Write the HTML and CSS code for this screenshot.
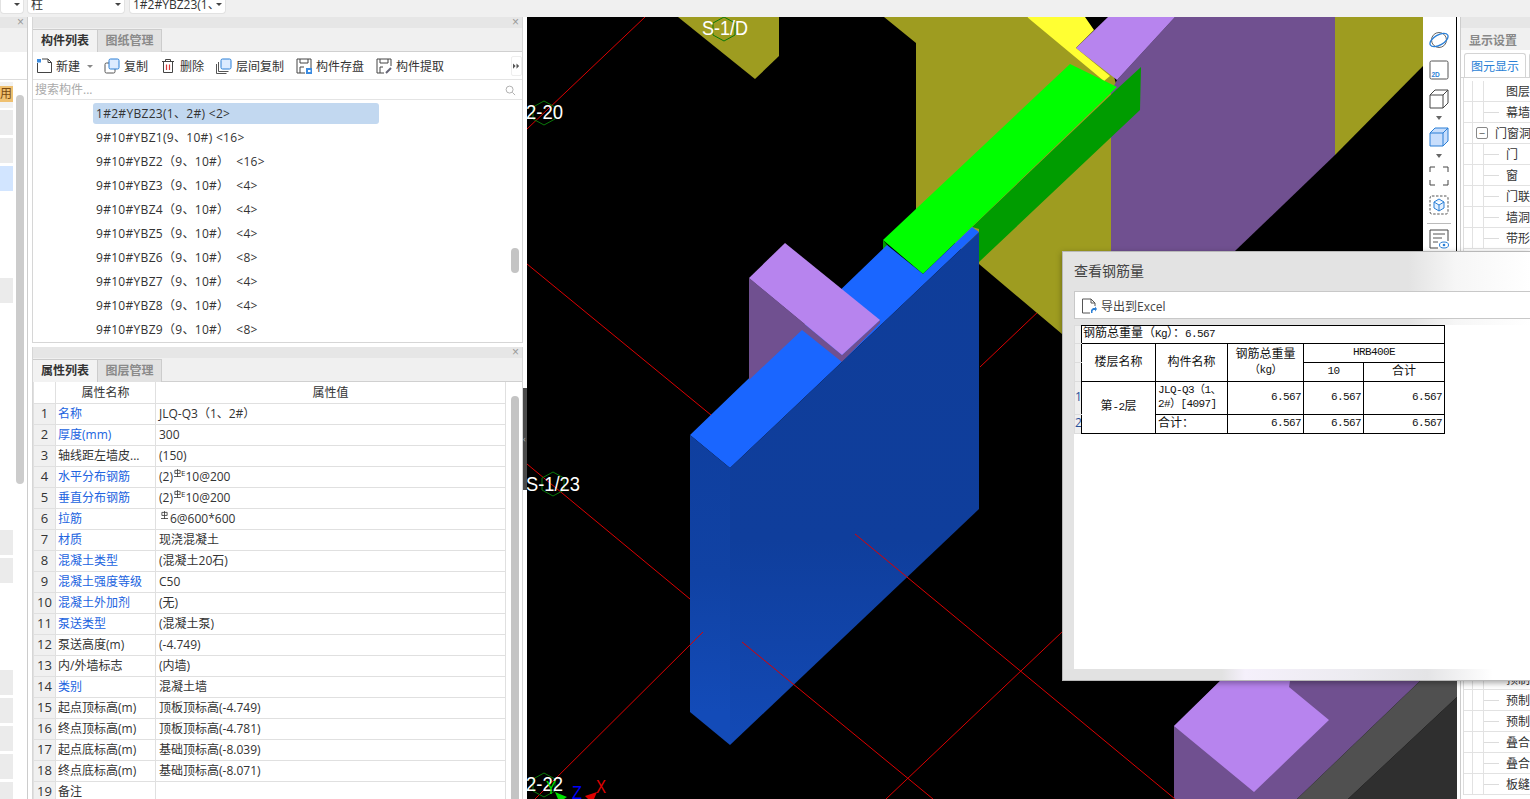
FILE: index.html
```html
<!DOCTYPE html>
<html lang="zh">
<head>
<meta charset="utf-8">
<title>查看钢筋量</title>
<link rel="stylesheet" href="styles.css">
</head>
<body>
<div class="app">
  <div class="topbar">
    <div class="combo c0"><span class="caret"></span></div>
    <div class="combo c1"><span class="combo-t">柱</span><span class="caret"></span></div>
    <div class="combo c2"><span class="combo-t">1#2#YBZ23(1、</span><span class="caret"></span></div>
  </div>
  <div class="main">
    <aside class="strip">
      <div class="phead"><span class="x">×</span></div>
      <div class="strip-tabs"></div>
      <div class="strip-tool"></div>
      <div class="strip-list">
        <div class="sr"><div class="sb sb-or"><span class="orange">用</span></div></div>
        <div class="sr"><div class="sb"></div></div>
        <div class="sr"><div class="sb"></div></div>
        <div class="sr"><div class="sb sb-blue"></div></div>
        <div class="sr"></div><div class="sr"></div><div class="sr"></div>
        <div class="sr"><div class="sb"></div></div>
        <div class="sr"></div><div class="sr"></div><div class="sr"></div><div class="sr"></div>
        <div class="sr"></div><div class="sr"></div><div class="sr"></div><div class="sr"></div>
        <div class="sr"><div class="sb"></div></div>
        <div class="sr"><div class="sb"></div></div>
        <div class="sr"></div><div class="sr"></div><div class="sr"></div>
        <div class="sr"><div class="sb"></div></div>
        <div class="sr"><div class="sb"></div></div>
        <div class="sr"><div class="sb"></div></div>
        <div class="sr"><div class="sb"></div></div>
        <div class="sr"><div class="sb"></div></div>
        <div class="strip-thumb"></div>
      </div>
    </aside>

    <section class="col">
      <div class="panel p-top">
        <div class="phead"><span class="x">×</span></div>
        <div class="tabs"><div class="tab on">构件列表</div><div class="tab">图纸管理</div></div>
        <div class="tools">
          <div class="tool tool-new">
            <svg class="ic" viewBox="0 0 16 16"><path d="M1.500 5v9.500h14V4.500L12 1H6" fill="none" stroke="#444"/><path d="M12 1v3.500h3.500" fill="none" stroke="#444"/><rect x="1" y="1" width="4" height="3.500" fill="#3b8be0"/></svg>
            <span>新建</span><span class="dd"></span>
          </div>
          <div class="tool">
            <svg class="ic" viewBox="0 0 16 16"><rect x="1" y="5" width="10" height="10" rx="1.500" fill="#fff" stroke="#555"/><rect x="5" y="1" width="10" height="10" rx="1.500" fill="#dcebff" stroke="#2a7fd6"/></svg>
            <span>复制</span>
          </div>
          <div class="tool">
            <svg class="ic" viewBox="0 0 16 16"><path d="M2 3.500h12M5.500 3.500V1.500h5v2M3.500 3.500v11h9v-11" fill="none" stroke="#444"/><path d="M6.500 6.500v5.500M9.500 6.500v5.500" stroke="#d93a3a" stroke-width="1.200"/></svg>
            <span>删除</span>
          </div>
          <div class="tool">
            <svg class="ic" viewBox="0 0 16 16"><path d="M.5 6v9.500h10M2.500 4v9.500h10" fill="none" stroke="#555"/><rect x="5" y="1" width="10" height="10" rx="1.500" fill="#dcebff" stroke="#2a7fd6"/></svg>
            <span>层间复制</span>
          </div>
          <div class="tool">
            <svg class="ic" viewBox="0 0 16 16"><path d="M9 15H1V1h14v9M4 1v4h8V1M4 15v-6h4" fill="none" stroke="#444"/><rect x="10" y="10" width="6" height="6" fill="#3b8be0"/><rect x="12" y="12" width="2.500" height="2" fill="#fff"/></svg>
            <span>构件存盘</span>
          </div>
          <div class="tool">
            <svg class="ic" viewBox="0 0 16 16"><path d="M8 15H1V1h14v7M4 1v4h8V1M4 15v-6h3" fill="none" stroke="#444"/><path d="M10 15l5-5" stroke="#667" stroke-width="2"/></svg>
            <span>构件提取</span>
          </div>
          <div class="more"><svg class="more-ic" viewBox="0 0 8 6"><path d="M0 0l3 3-3 3zM4 0l3 3-3 3z" fill="#555"/></svg></div>
        </div>
        <div class="search">
          <span>搜索构件...</span>
          <svg class="search-ic" viewBox="0 0 12 12"><circle cx="5" cy="5" r="3.800" fill="none" stroke="#aaa"/><path d="M8 8l3 3" stroke="#aaa"/></svg>
        </div>
        <div class="list">
          <div class="li sel">1#2#YBZ23(1、2#) &lt;2&gt;</div>
          <div class="li">9#10#YBZ1(9、10#) &lt;16&gt;</div>
          <div class="li">9#10#YBZ2（9、10#） &nbsp;&lt;16&gt;</div>
          <div class="li">9#10#YBZ3（9、10#） &nbsp;&lt;4&gt;</div>
          <div class="li">9#10#YBZ4（9、10#） &nbsp;&lt;4&gt;</div>
          <div class="li">9#10#YBZ5（9、10#） &nbsp;&lt;4&gt;</div>
          <div class="li">9#10#YBZ6（9、10#） &nbsp;&lt;8&gt;</div>
          <div class="li">9#10#YBZ7（9、10#） &nbsp;&lt;4&gt;</div>
          <div class="li">9#10#YBZ8（9、10#） &nbsp;&lt;4&gt;</div>
          <div class="li">9#10#YBZ9（9、10#） &nbsp;&lt;8&gt;</div>
          <div class="list-thumb"></div>
        </div>
      </div>

      <div class="panel p-bot">
        <div class="phead"><span class="x">×</span></div>
        <div class="tabs"><div class="tab on">属性列表</div><div class="tab">图层管理</div></div>
        <div class="props">
          <table class="ptable">
            <colgroup><col class="pc0"><col class="pc1"><col></colgroup>
            <thead><tr><th></th><th>属性名称</th><th>属性值</th></tr></thead>
            <tbody>
              <tr><td class="n">1</td><td class="b">名称</td><td>JLQ-Q3（1、2#）</td></tr>
              <tr><td class="n">2</td><td class="b">厚度(mm)</td><td>300</td></tr>
              <tr><td class="n">3</td><td class="k">轴线距左墙皮...</td><td>(150)</td></tr>
              <tr><td class="n">4</td><td class="b">水平分布钢筋</td><td>(2)<svg class="rb" viewBox="0 0 8 9"><path d="M1 1.500h6v3.500H1zM4 0v9M0 8.500h8" fill="none" stroke="#333" stroke-width=".9"/></svg><sup>E</sup>10@200</td></tr>
              <tr><td class="n">5</td><td class="b">垂直分布钢筋</td><td>(2)<svg class="rb" viewBox="0 0 8 9"><path d="M1 1.500h6v3.500H1zM4 0v9M0 8.500h8" fill="none" stroke="#333" stroke-width=".9"/></svg><sup>E</sup>10@200</td></tr>
              <tr><td class="n">6</td><td class="b">拉筋</td><td><svg class="rb rb6" viewBox="0 0 8 9"><path d="M1 1.500h6v3.500H1zM4 0v9M0 8.500h8" fill="none" stroke="#333" stroke-width=".9"/></svg>6@600*600</td></tr>
              <tr><td class="n">7</td><td class="b">材质</td><td>现浇混凝土</td></tr>
              <tr><td class="n">8</td><td class="b">混凝土类型</td><td>(混凝土20石)</td></tr>
              <tr><td class="n">9</td><td class="b">混凝土强度等级</td><td>C50</td></tr>
              <tr><td class="n">10</td><td class="b">混凝土外加剂</td><td>(无)</td></tr>
              <tr><td class="n">11</td><td class="b">泵送类型</td><td>(混凝土泵)</td></tr>
              <tr><td class="n">12</td><td class="k">泵送高度(m)</td><td>(-4.749)</td></tr>
              <tr><td class="n">13</td><td class="k">内/外墙标志</td><td>(内墙)</td></tr>
              <tr><td class="n">14</td><td class="b">类别</td><td>混凝土墙</td></tr>
              <tr><td class="n">15</td><td class="k">起点顶标高(m)</td><td>顶板顶标高(-4.749)</td></tr>
              <tr><td class="n">16</td><td class="k">终点顶标高(m)</td><td>顶板顶标高(-4.781)</td></tr>
              <tr><td class="n">17</td><td class="k">起点底标高(m)</td><td>基础顶标高(-8.039)</td></tr>
              <tr><td class="n">18</td><td class="k">终点底标高(m)</td><td>基础顶标高(-8.071)</td></tr>
              <tr><td class="n">19</td><td class="k">备注</td><td></td></tr>
            </tbody>
          </table>
          <div class="props-scroll"><div class="props-thumb"></div></div>
        </div>
      </div>
    </section>

    <div class="split"><div class="split-grip">‹</div></div>

    <div class="view">
      <svg class="scene" viewBox="527 17 930 782">
        <defs>
          <linearGradient id="frontBlue" gradientUnits="userSpaceOnUse" x1="0" y1="232" x2="0" y2="745">
            <stop offset="0" stop-color="#0f3d99"/>
            <stop offset=".6" stop-color="#0f3e9c"/>
            <stop offset="1" stop-color="#134ab6"/>
          </linearGradient>
          <linearGradient id="sideBlue" gradientUnits="userSpaceOnUse" x1="0" y1="435" x2="0" y2="712">
            <stop offset="0" stop-color="#0f3f9f"/>
            <stop offset=".5" stop-color="#1042a4"/>
            <stop offset="1" stop-color="#134bb8"/>
          </linearGradient>
        </defs>
        <rect x="527" y="17" width="930" height="782" fill="#000"/>
        <g class="red">
          <path d="M645 17L527 129M527 264L711 415M1062 289L980 367M527 464L690 599M886 799L1062 632"/>
        </g>
        <polygon class="olive" points="678,17 779,17 779,56 755,79"/>
        <polygon class="olive" points="884,17 1027,17 1112,70 1118,90 1111,92 1111,334 1062,334 979,264 916,210 916,43"/>
        <polygon class="purple" points="1111,92 1117,80 1175,17 1335,17 1335,155 1111,370"/>
        <polygon class="olive" points="1335,17 1424,17 1424,65 1335,155"/>
        <polygon class="yellow" points="1027,17 1085,17 1094,30 1076,48 1110,76 1104,81"/>
        <polygon class="lilac" points="1108,17 1175,17 1117,80 1076,48"/>
        <polygon class="dgreen" points="1141,67 1140,110 979,262 979,229 972,227 1117,89"/>
        <polygon class="dgreen" points="883,240 883,251 888,246"/>
        <polygon class="green" points="1070,64 1117,87 923,274 883,240"/>
        <polygon class="lblue" points="690,435 887,245 923,274 972,227 979,232 730,468"/>
        <polygon class="purple" points="749,278 842,355 880,320 880,323 842,362 802,330 749,380"/>
        <polygon class="lilac" points="785,243 880,320 842,355 749,278"/>
        <polygon fill="url(#frontBlue)" points="730,468 979,232 979,509 730,745"/>
        <polygon fill="url(#sideBlue)" points="690,435 730,468 730,745 690,712"/>
        <polygon class="purple" points="1174,726 1220,681 1420,681 1297,799 1174,799"/>
        <polygon class="lilac" points="1174,726 1220,681 1290,681 1289,687 1329,720 1254,792"/>
        <polygon class="grey1" points="1420,681 1457,681 1457,697 1348,799 1297,799"/>
        <polygon class="grey2" points="1457,697 1457,799 1348,799"/>
        <g class="red">
          <path d="M703 632L535 799M855 534L1175 799M742 642L933 799"/>
        </g>
        <g class="hex">
          <polygon points="724,17 735,23 735,35 724,41 713,35 713,23"/>
          <polygon points="544,101 555,107 555,119 544,125 533,119 533,107"/>
          <polygon points="553,472 564,478 564,490 553,496 542,490 542,478"/>
          <polygon points="544,773 555,779 555,791 544,797 533,791 533,779"/>
        </g>
        <g class="lab">
          <text x="702" y="35" textLength="46" lengthAdjust="spacingAndGlyphs">S-1/D</text>
          <text x="526" y="119" textLength="37" lengthAdjust="spacingAndGlyphs">2-20</text>
          <text x="526" y="491" textLength="54" lengthAdjust="spacingAndGlyphs">S-1/23</text>
          <text x="526" y="791" textLength="37" lengthAdjust="spacingAndGlyphs">2-22</text>
        </g>
        <polygon fill="#00e000" points="555,792 567,797 564,799 558,799"/>
        <polygon fill="#e00000" points="597,792 585,796 588,799 594,799"/>
        <text class="ax ax-y" x="546" y="794" textLength="10" lengthAdjust="spacingAndGlyphs">Y</text>
        <text class="ax ax-z" x="572" y="799" textLength="10" lengthAdjust="spacingAndGlyphs">Z</text>
        <text class="ax ax-x" x="596" y="793" textLength="10" lengthAdjust="spacingAndGlyphs">X</text>
      </svg>
      <div class="vbar">
        <svg class="vi vi-a" viewBox="0 0 20 20"><ellipse cx="10" cy="10" rx="7.500" ry="7.500" fill="none" stroke="#666"/><ellipse cx="10" cy="10" rx="10" ry="5" transform="rotate(-30 10 10)" fill="none" stroke="#2a7fd6" stroke-width="1.300"/></svg>
        <svg class="vi vi-b" viewBox="0 0 20 20"><rect x="1" y="1" width="18" height="18" rx="1.500" fill="none" stroke="#555"/><text class="t2d" x="2.500" y="16.500">2D</text></svg>
        <svg class="vi vi-c" viewBox="0 0 20 20"><path d="M1 6v13h13V6zM1 6l5-5h13v13l-5 5M14 6l5-5" fill="#fff" stroke="#444"/></svg>
        <span class="va"></span>
        <svg class="vi vi-c" viewBox="0 0 20 20"><path d="M1 6l5-5h13v13l-5 5H1z" fill="#c8defc" stroke="#2a7fd6"/><path d="M1 6h13v13M14 6l5-5" fill="none" stroke="#2a7fd6"/></svg>
        <span class="va va-2"></span>
        <svg class="vi vi-a" viewBox="0 0 20 20"><path d="M1 6V1h5M14 1h5v5M19 14v5h-5M6 19H1v-5" fill="none" stroke="#444"/></svg>
        <svg class="vi vi-d" viewBox="0 0 20 20"><rect x="1" y="1" width="18" height="18" rx="2" fill="none" stroke="#555" stroke-dasharray="2.500 1.500"/><path d="M10 4l5 3v6l-5 3-5-3V7zM5 7l5 3 5-3M10 10v6" fill="#e3f0ff" stroke="#2a7fd6"/></svg>
        <div class="vsep"></div>
        <svg class="vi" viewBox="0 0 20 20"><path d="M9 19H1V1h18v11" fill="none" stroke="#444"/><path d="M4 5h12M4 9h9M4 13h5" stroke="#555"/><ellipse cx="15" cy="16" rx="4.500" ry="3" fill="#fff" stroke="#2a7fd6"/><circle cx="15" cy="16" r="1.300" fill="#2a7fd6"/></svg>
      </div>
    </div>

    <aside class="rpanel">
      <div class="phead"></div>
      <div class="r-title">显示设置</div>
      <div class="r-tabs"><div class="r-tab">图元显示</div><div class="r-tab r-tab2"></div></div>
      <div class="tree">
        <div class="tr"><span class="t1"></span><span class="t2"></span><span class="t3"></span><span class="tt">图层</span></div>
        <div class="tr"><span class="t1"></span><span class="t2"></span><span class="t3 d"></span><span class="tt">幕墙</span></div>
        <div class="tr"><span class="t1"></span><span class="tbox">−</span><span class="tt tt-open">门窗洞口</span></div>
        <div class="tr"><span class="t1"></span><span class="t2"></span><span class="t3 d"></span><span class="tt">门</span></div>
        <div class="tr"><span class="t1"></span><span class="t2"></span><span class="t3 d"></span><span class="tt">窗</span></div>
        <div class="tr"><span class="t1"></span><span class="t2"></span><span class="t3 d"></span><span class="tt">门联窗</span></div>
        <div class="tr"><span class="t1"></span><span class="t2"></span><span class="t3 d"></span><span class="tt">墙洞</span></div>
        <div class="tr"><span class="t1"></span><span class="t2"></span><span class="t3 d"></span><span class="tt">带形窗</span></div>
        <div class="tree-gap"></div>
        <div class="tr"><span class="t1"></span><span class="t2"></span><span class="t3 d"></span><span class="tt">预制柱</span></div>
        <div class="tr"><span class="t1"></span><span class="t2"></span><span class="t3 d"></span><span class="tt">预制梁</span></div>
        <div class="tr"><span class="t1"></span><span class="t2"></span><span class="t3 d"></span><span class="tt">预制墙</span></div>
        <div class="tr"><span class="t1"></span><span class="t2"></span><span class="t3 d"></span><span class="tt">叠合板</span></div>
        <div class="tr"><span class="t1"></span><span class="t2"></span><span class="t3 d"></span><span class="tt">叠合梁</span></div>
        <div class="tr"><span class="t1"></span><span class="t2"></span><span class="t3 d"></span><span class="tt">板缝</span></div>
      </div>
    </aside>
  </div>

  <div class="dlg">
    <div class="dlg-head">
      <div class="dlg-title">查看钢筋量</div>
      <div class="dlg-tool">
        <svg class="ic" viewBox="0 0 16 16"><path d="M9 15H1.500V1H10l4 4v3" fill="none" stroke="#555"/><path d="M10 1v4h4" fill="none" stroke="#555"/><path d="M10 15v-3l2-2h2v-1.500l2 2.500-2 2.500V12h-1.500l-1 1v2z" fill="#2a7fd6"/></svg>
        <span>导出到Excel</span>
      </div>
    </div>
    <div class="dlg-body">
      <table class="rt">
        <colgroup><col class="r0"><col class="r1"><col class="r2"><col class="r3"><col class="r4"><col class="r5"></colgroup>
        <tr class="h18"><td class="rh"></td><td colspan="5" class="l ttl">钢筋总重量（<span class="m">Kg</span>）：<span class="m">6.567</span></td></tr>
        <tr class="h19"><td class="rh"></td><td rowspan="2" class="c">楼层名称</td><td rowspan="2" class="c">构件名称</td><td rowspan="2" class="c top">钢筋总重量<br><span class="m">（kg）</span></td><td colspan="2" class="c m">HRB400E</td></tr>
        <tr class="h19"><td class="rh"></td><td class="c m">10</td><td class="c">合计</td></tr>
        <tr class="h33"><td class="rh">1</td><td rowspan="2" class="c">第<span class="m">-2</span>层</td><td class="l m tight">JLQ-Q3（1、<br>2#）[4097]</td><td class="r m">6.567</td><td class="r m">6.567</td><td class="r m">6.567</td></tr>
        <tr class="h19"><td class="rh">2</td><td class="l">合计：</td><td class="r m">6.567</td><td class="r m">6.567</td><td class="r m">6.567</td></tr>
      </table>
    </div>
    <div class="dlg-foot"></div>
  </div>
</div>
</body>
</html>
```
FILE: styles.css
```css
* { box-sizing: border-box; }
html, body { margin: 0; padding: 0; height: 100%; overflow: hidden; background: #f0f0f0; }
body { font: 12px/1.2 "Open Sans", "Noto Sans CJK SC", "Liberation Sans", sans-serif; color: #333; }
.app { position: relative; width: 1530px; height: 799px; overflow: hidden; }

.topbar { height: 17px; display: flex; gap: 3px; padding-bottom: 3px; overflow: hidden; background: #f0f0f0; }
.combo { height: 14px; background: #fff; border: 1px solid #e2e2e2; border-top: 0; border-radius: 0 0 4px 4px; display: flex; justify-content: space-between; align-items: flex-start; padding: 0 3px 0 3px; overflow: hidden; }
.c0 { width: 24px; justify-content: flex-end; }
.c1 { width: 98px; }
.c2 { width: 97px; margin-left: 1px; }
.combo-t { line-height: 14px; margin-top: -2px; white-space: nowrap; overflow: hidden; }
.caret { width: 0; height: 0; border: 3px solid transparent; border-top: 3px solid #444; border-bottom: 0; margin: 3px 0 0 2px; flex: none; }

.main { display: flex; height: 782px; background: #fff; }
.phead { height: 11px; background: #e6e6e6; position: relative; }
.x { position: absolute; right: 3px; top: -1px; font-family: "Liberation Sans", sans-serif; font-size: 12px; line-height: 12px; color: #999; }

.strip { width: 28px; border-right: 1px solid #ccc; flex: none; }
.strip-tabs { height: 24px; background: #f0f0f0; }
.strip-tool { height: 28px; border-bottom: 1px solid #ddd; }
.strip-list { position: relative; height: 719px; padding-top: 2px; overflow: hidden; }
.sr { height: 28px; }
.sb { width: 13px; height: 25px; background: #ebebeb; }
.sb-or { background: #f2f2f2; padding-top: 4px; height: 26px; }
.orange { display: block; height: 16px; line-height: 16px; background: #efc070; color: #7a4a10; font-size: 12px; overflow: hidden; }
.sb-blue { background: #d2e5ff; }
.strip-thumb { position: absolute; left: 16px; top: 15px; width: 8px; height: 389px; background: #ccc; border-radius: 4px; }

.col { width: 491px; margin-left: 4px; flex: none; display: flex; flex-direction: column; background: #fff; }
.panel { border: 1px solid #d6d6d6; border-top: 0; }
.p-top { height: 326px; position: relative; }
.p-bot { margin-top: 4px; height: 452px; border-bottom: 0; }
.tabs { height: 24px; padding-top: 1px; display: flex; background: #f0f0f0; border-bottom: 1px solid #d0d0d0; }
.tab { width: 64px; height: 23px; line-height: 22px; text-align: center; font-weight: 700; color: #8a8a8a; background: #e2e2e2; border-right: 1px solid #ccc; border-top: 1px solid #ccc; }
.tab.on { width: 65px; color: #333; background: #f2f2f2; }

.tools { height: 28px; display: flex; align-items: center; gap: 12px; padding: 3px 0 0 3px; border-bottom: 1px solid #e4e4e4; position: relative; }
.tool { display: flex; align-items: center; gap: 4px; white-space: nowrap; }
.tool .ic { margin-top: -2px; }
.tool-new { margin-right: -1px; }
.ic { width: 16px; height: 16px; flex: none; }
.dd { width: 0; height: 0; border: 3px solid transparent; border-top: 3px solid #888; border-bottom: 0; margin-left: 3px; }
.more { position: absolute; right: 0; top: 4px; width: 11px; height: 20px; display: flex; align-items: center; justify-content: center; border: 1px solid #eee; border-radius: 2px; }
.more-ic { width: 7px; height: 6px; }

.search { height: 20px; padding: 2px 6px 0 2px; display: flex; align-items: center; justify-content: space-between; color: #aaa; border-bottom: 1px solid #e4e4e4; }
.search-ic { width: 11px; height: 11px; }

.list { position: relative; height: 244px; padding-top: 2px; overflow: hidden; }
.li { height: 24px; padding-left: 63px; line-height: 24px; white-space: nowrap; letter-spacing: .3px; }
.li.sel { margin: 1px 0 2px 60px; width: 286px; height: 21px; padding-left: 3px; line-height: 21px; background: #c2d8f0; border-radius: 3px; }
.list-thumb { position: absolute; left: 478px; top: 148px; width: 8px; height: 25px; background: #c4c4c4; border-radius: 4px; }

.props { position: relative; display: flex; height: 417px; overflow: hidden; }
.ptable { width: 473px; height: 0; table-layout: fixed; border-collapse: collapse; flex: none; }
.pc0 { width: 22px; }
.pc1 { width: 100px; }
.ptable th { height: 21px; padding: 2px 0 0; font-weight: 400; border: 1px solid #e0e0e0; border-top: 0; text-align: center; }
.ptable td { height: 21px; padding: 0 0 0 3px; border: 1px solid #e0e0e0; white-space: nowrap; overflow: hidden; line-height: 17px; }
.ptable td.n { padding: 0; text-align: center; background: #f0f0f0; font-size: 13px; }
.ptable td.b { color: #2163e0; padding-left: 2px; }
.ptable td.k { padding-left: 2px; }
sup { font-size: 8px; line-height: 0; vertical-align: 5px; }
.rb { width: 7px; height: 8px; vertical-align: 4px; margin-left: 1px; }
.rb6 { margin-left: 2px; margin-right: 2px; }
.props-scroll { flex: 1; position: relative; }
.props-thumb { position: absolute; left: 5px; top: 14px; width: 8px; height: 420px; background: #c4c4c4; border-radius: 4px; }

.split { width: 4px; flex: none; background: #fff; position: relative; }
.split-grip { position: absolute; left: 0; top: 371px; width: 4px; height: 102px; line-height: 102px; background: #4a4a4a; color: #aaa; font-size: 9px; overflow: hidden; }

.view { position: relative; width: 930px; height: 782px; flex: none; background: #000; }
.scene { display: block; width: 930px; height: 782px; }
.red path { fill: none; stroke: #dc0000; stroke-width: 1; }
.olive { fill: #9e9c20; }
.purple { fill: #705090; }
.lilac { fill: #b784ee; }
.yellow { fill: #ffff33; }
.green { fill: #00ff00; }
.dgreen { fill: #009c00; }
.lblue { fill: #1a66ff; }
.grey1 { fill: #505050; }
.grey2 { fill: #2f2f2f; }
.hex polygon { fill: none; stroke: #0a7a0a; stroke-width: 1; }
.lab text { fill: #fff; font: 20px "Liberation Sans", sans-serif; }
.ax { font: 18px "Liberation Sans", sans-serif; }
.ax-y { fill: #00e000; }
.ax-z { fill: #0000ff; }
.ax-x { fill: #e00000; }

.vbar { position: absolute; left: 896px; top: 0; width: 33px; height: 234px; background: #fff; display: flex; flex-direction: column; align-items: center; padding-top: 13px; padding-right: 1px; }
.vi { width: 20px; height: 20px; flex: none; }
.vi-a { margin-bottom: 10px; }
.vi-b { margin-bottom: 9px; }
.vi-c { margin-bottom: 7px; }
.vi-d { margin-bottom: 8px; }
.vbar .vi-a:nth-child(7) { margin-bottom: 9px; }
.va { width: 0; height: 0; border: 3px solid transparent; border-top: 4px solid #666; border-bottom: 0; margin-bottom: 7px; flex: none; }
.va-2 { margin-bottom: 8px; }
.vsep { width: 24px; height: 1px; background: #bbb; margin-bottom: 5px; flex: none; }
.t2d { fill: #2a7fd6; font: 700 6.500px "Liberation Sans", sans-serif; }

.rpanel { flex: 1; margin-left: 3px; border-left: 1px solid #ccc; overflow: hidden; background: #fff; min-width: 0; }
.r-title { height: 22px; padding-left: 8px; line-height: 25px; background: #f0f0f0; color: #888; font-weight: 700; }
.r-tabs { height: 28px; display: flex; align-items: flex-end; gap: 3px; padding-left: 3px; background: #fff; border-bottom: 1px solid #d4d4d4; }
.r-tab { width: 62px; height: 24px; flex: none; line-height: 25px; text-align: center; color: #2a7fd6; border: 1px solid #d4d4d4; border-bottom: 0; border-radius: 3px 3px 0 0; }
.r-tab2 { color: #888; }
.tree { margin-left: 2px; border-left: 1px solid #ddd; padding-top: 3px; }
.tr { height: 21px; display: flex; align-items: stretch; border-bottom: 1px solid #e2e2e2; white-space: nowrap; }
.tree-gap { height: 420px; }
.t1 { width: 9px; flex: none; border-right: 1px solid #e2e2e2; }
.t2 { width: 11px; flex: none; border-right: 1px solid #e2e2e2; }
.t3 { width: 22px; flex: none; }
.t3.d { background: linear-gradient(#dcdcdc, #dcdcdc) 0 10px / 15px 1px no-repeat; }
.tbox { width: 12px; height: 12px; margin: 4px 0 0 3px; border: 1px solid #888; border-radius: 2px; flex: none; line-height: 9px; text-align: center; color: #555; font-size: 11px; }
.tt { line-height: 22px; color: #333; }
.tt-open { margin-left: 7px; }

.dlg { position: absolute; left: 1062px; top: 251px; width: 468px; height: 430px; display: flex; flex-direction: column; border: 1px solid #b8b8b8; border-right: 0; box-shadow: 0 2px 6px rgba(0, 0, 0, .35); background: #e3e3e3; }
.dlg-head { height: 73px; padding-left: 11px; background: linear-gradient(90deg, #e3e3e3 0, #e3e3e3 74%, #f6f6f6 84%, #fff 100%); }
.dlg-title { height: 39px; line-height: 38px; font-size: 14px; color: #444; }
.dlg-tool { height: 28px; display: flex; align-items: center; gap: 4px; padding: 4px 0 0 6px; background: #fff; border: 1px solid #c8c8c8; border-right: 0; color: #444; }
.dlg-tool .ic { margin-top: -3px; }
.dlg-body { flex: 1; margin-left: 11px; background: #fff; }
.dlg-foot { height: 11px; background: linear-gradient(90deg, #e2e2e2 0, #e2e2e2 34%, #f5f0fb 39%, #ecebf0 62%, #e4e4e6 78%, #fff 92%); }

.rt { width: 371px; table-layout: fixed; border-collapse: collapse; color: #111; }
.r0 { width: 7px; } .r1 { width: 74px; } .r2 { width: 72px; } .r3 { width: 76px; } .r4 { width: 60px; } .r5 { width: 81px; }
.rt td { border: 1px solid #000; padding: 0 2px 2px; line-height: 14px; overflow: hidden; white-space: nowrap; }
.rt td.ttl { padding: 0 0 2px 1px; }
.rt td.rh { background: #efefef; border: 1px solid #dcdcdc; border-right-color: #000; padding: 0 0 2px; color: #27509a; }
.h18 { height: 17px; } .h19 { height: 19px; } .h33 { height: 33px; }
.rt .c { text-align: center; }
.rt .l { text-align: left; }
.rt .r { text-align: right; }
.rt .top { vertical-align: top; padding-top: 2px; line-height: 15px; }
.m { font-family: "Liberation Mono", "Noto Sans CJK SC", monospace; font-size: 11px; letter-spacing: -.6px; }
.tight { line-height: 15px; }
```
